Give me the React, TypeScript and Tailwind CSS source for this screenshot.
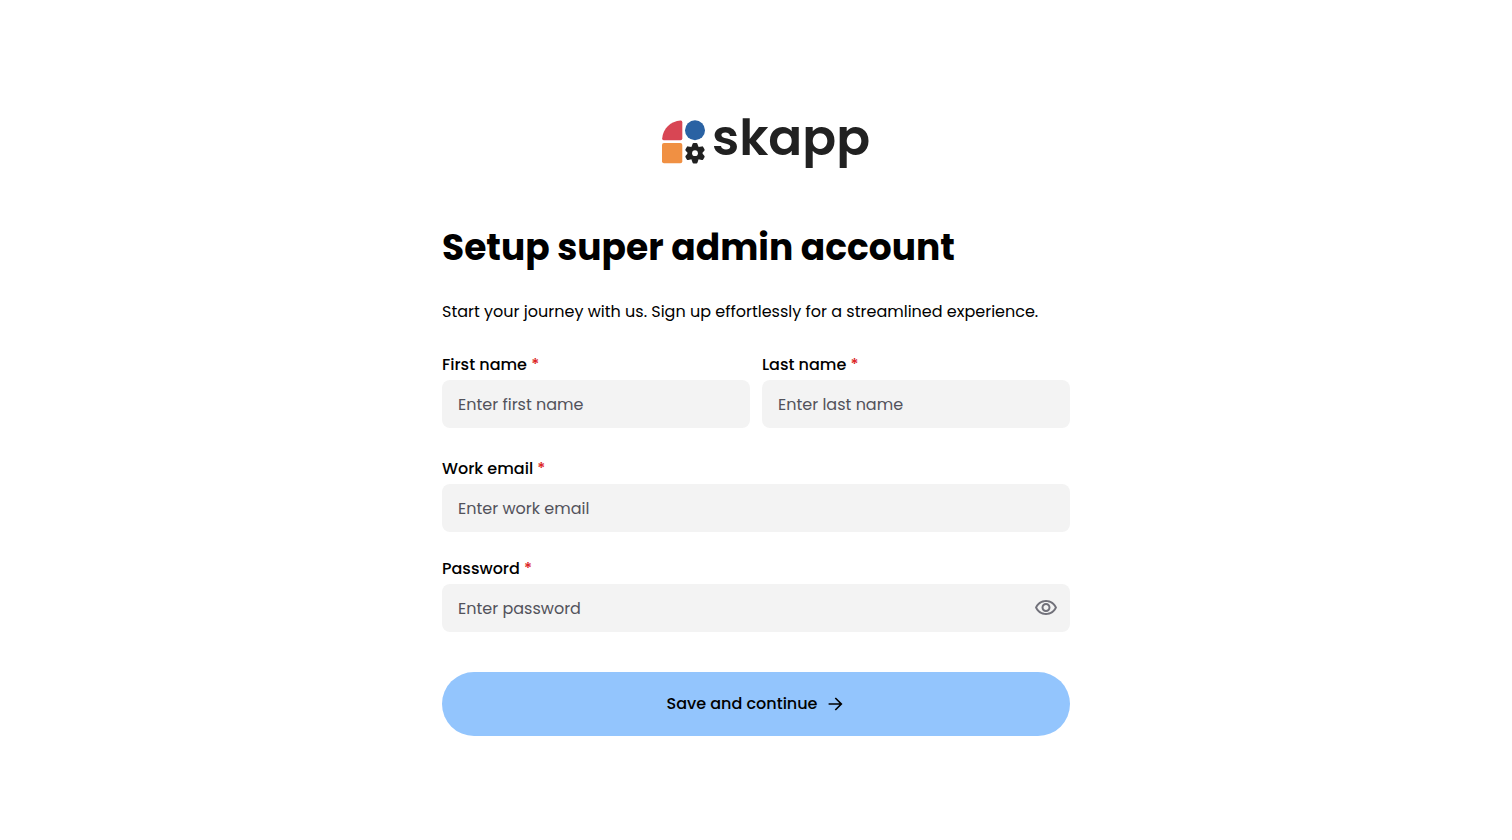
import { useState } from "react";
import type { ReactNode } from "react";

const TEETH = [0, 60, 120, 180, 240, 300];

function LogoMark() {
  return (
    <svg width="44" height="44" viewBox="0 0 44 44" aria-hidden="true">
      <path
        d="M18.6 .6C8.600 1.300 1.100 8.600 .15 18.500Q.05 20.300 1.700 20.300H18.600Q20.300 20.300 20.300 18.600V2.200Q20.300 .5 18.600 .6Z"
        fill="#d84654"
      />
      <circle cx="33" cy="10.300" r="10" fill="#2a62a3" />
      <rect x="0" y="23" width="20.300" height="20.300" rx="2" fill="#f09043" />
      <g transform="translate(33 33.200)" fill="#212121">
        <circle r="7.300" />
        {TEETH.map((angle) => (
          <path
            key={angle}
            transform={`rotate(${angle})`}
            d="M-3.600 -6L-2.500 -9.300Q-2.200 -10.200 -1.300 -10.200H1.300Q2.200 -10.200 2.500 -9.300L3.600 -6Z"
          />
        ))}
        <circle r="2.900" fill="#fff" />
      </g>
    </svg>
  );
}

function EyeIcon() {
  return (
    <svg width="24" height="24" viewBox="0 0 24 24" fill="#71717a" aria-hidden="true">
      <path d="M12 6c3.790 0 7.170 2.130 8.820 5.500C19.170 14.870 15.790 17 12 17s-7.170-2.130-8.820-5.500C4.830 8.130 8.210 6 12 6m0-2C7 4 2.730 7.110 1 11.500 2.730 15.890 7 19 12 19s9.270-3.110 11-7.500C21.270 7.110 17 4 12 4zm0 5c1.380 0 2.500 1.120 2.500 2.500S13.380 14 12 14s-2.500-1.120-2.500-2.500S10.620 9 12 9m0-2c-2.480 0-4.500 2.020-4.500 4.500S9.520 16 12 16s4.500-2.020 4.500-4.500S14.480 7 12 7z" />
    </svg>
  );
}

function ArrowIcon() {
  return (
    <svg width="20" height="20" viewBox="0 0 20 20" fill="none" stroke="#000" strokeWidth="1.700" aria-hidden="true">
      <path d="M2.600 10H15.200M9.300 4L15.300 10L9.300 16" />
    </svg>
  );
}

interface FieldProps {
  id: string;
  label: string;
  placeholder: string;
  type?: string;
  children?: ReactNode;
}

function Field({ id, label, placeholder, type = "text", children }: FieldProps) {
  return (
    <div className="flex min-w-0 flex-1 flex-col gap-0.5">
      <label htmlFor={id} className="text-base leading-[26px] font-medium text-black">
        {label} <span className="text-[#dc2626]">*</span>
      </label>
      <div className="flex h-12 items-center rounded-lg bg-[#f3f3f3] pr-3 pl-4">
        <input
          id={id}
          type={type}
          required
          placeholder={placeholder}
          className="h-full min-w-0 flex-1 bg-transparent text-base text-black outline-none placeholder:text-[#52525b]"
        />
        {children}
      </div>
    </div>
  );
}

export default function App() {
  const [visible, setVisible] = useState(false);
  return (
    <main className="flex min-h-screen justify-center bg-white px-6 pt-28 pb-26 font-['Poppins','Inter',sans-serif] text-black">
      <div className="w-full max-w-[628px]">
        <div className="flex h-15 items-center justify-center gap-1.5 pl-5">
          <LogoMark />
          <span className="pb-2 text-[50px] leading-12 font-semibold text-[#212121]">skapp</span>
        </div>
        <h1 className="mt-12 text-4xl leading-14 font-bold">Setup super admin account</h1>
        <p className="mt-6 text-base leading-6">
          Start your journey with us. Sign up effortlessly for a streamlined experience.
        </p>
        <form className="mt-7" onSubmit={(event) => event.preventDefault()}>
          <div className="flex gap-3">
            <Field id="first-name" label="First name" placeholder="Enter first name" />
            <Field id="last-name" label="Last name" placeholder="Enter last name" />
          </div>
          <div className="mt-7">
            <Field id="email" label="Work email" placeholder="Enter work email" type="email" />
          </div>
          <div className="mt-6">
            <Field
              id="password"
              label="Password"
              placeholder="Enter password"
              type={visible ? "text" : "password"}
            >
              <button type="button" aria-label="Toggle password visibility" onClick={() => setVisible(!visible)}>
                <EyeIcon />
              </button>
            </Field>
          </div>
          <button
            type="submit"
            className="mt-10 flex h-16 w-full items-center justify-center gap-2 rounded-full bg-[#93c5fd] text-base leading-[26px] font-medium"
          >
            Save and continue
            <ArrowIcon />
          </button>
        </form>
      </div>
    </main>
  );
}
